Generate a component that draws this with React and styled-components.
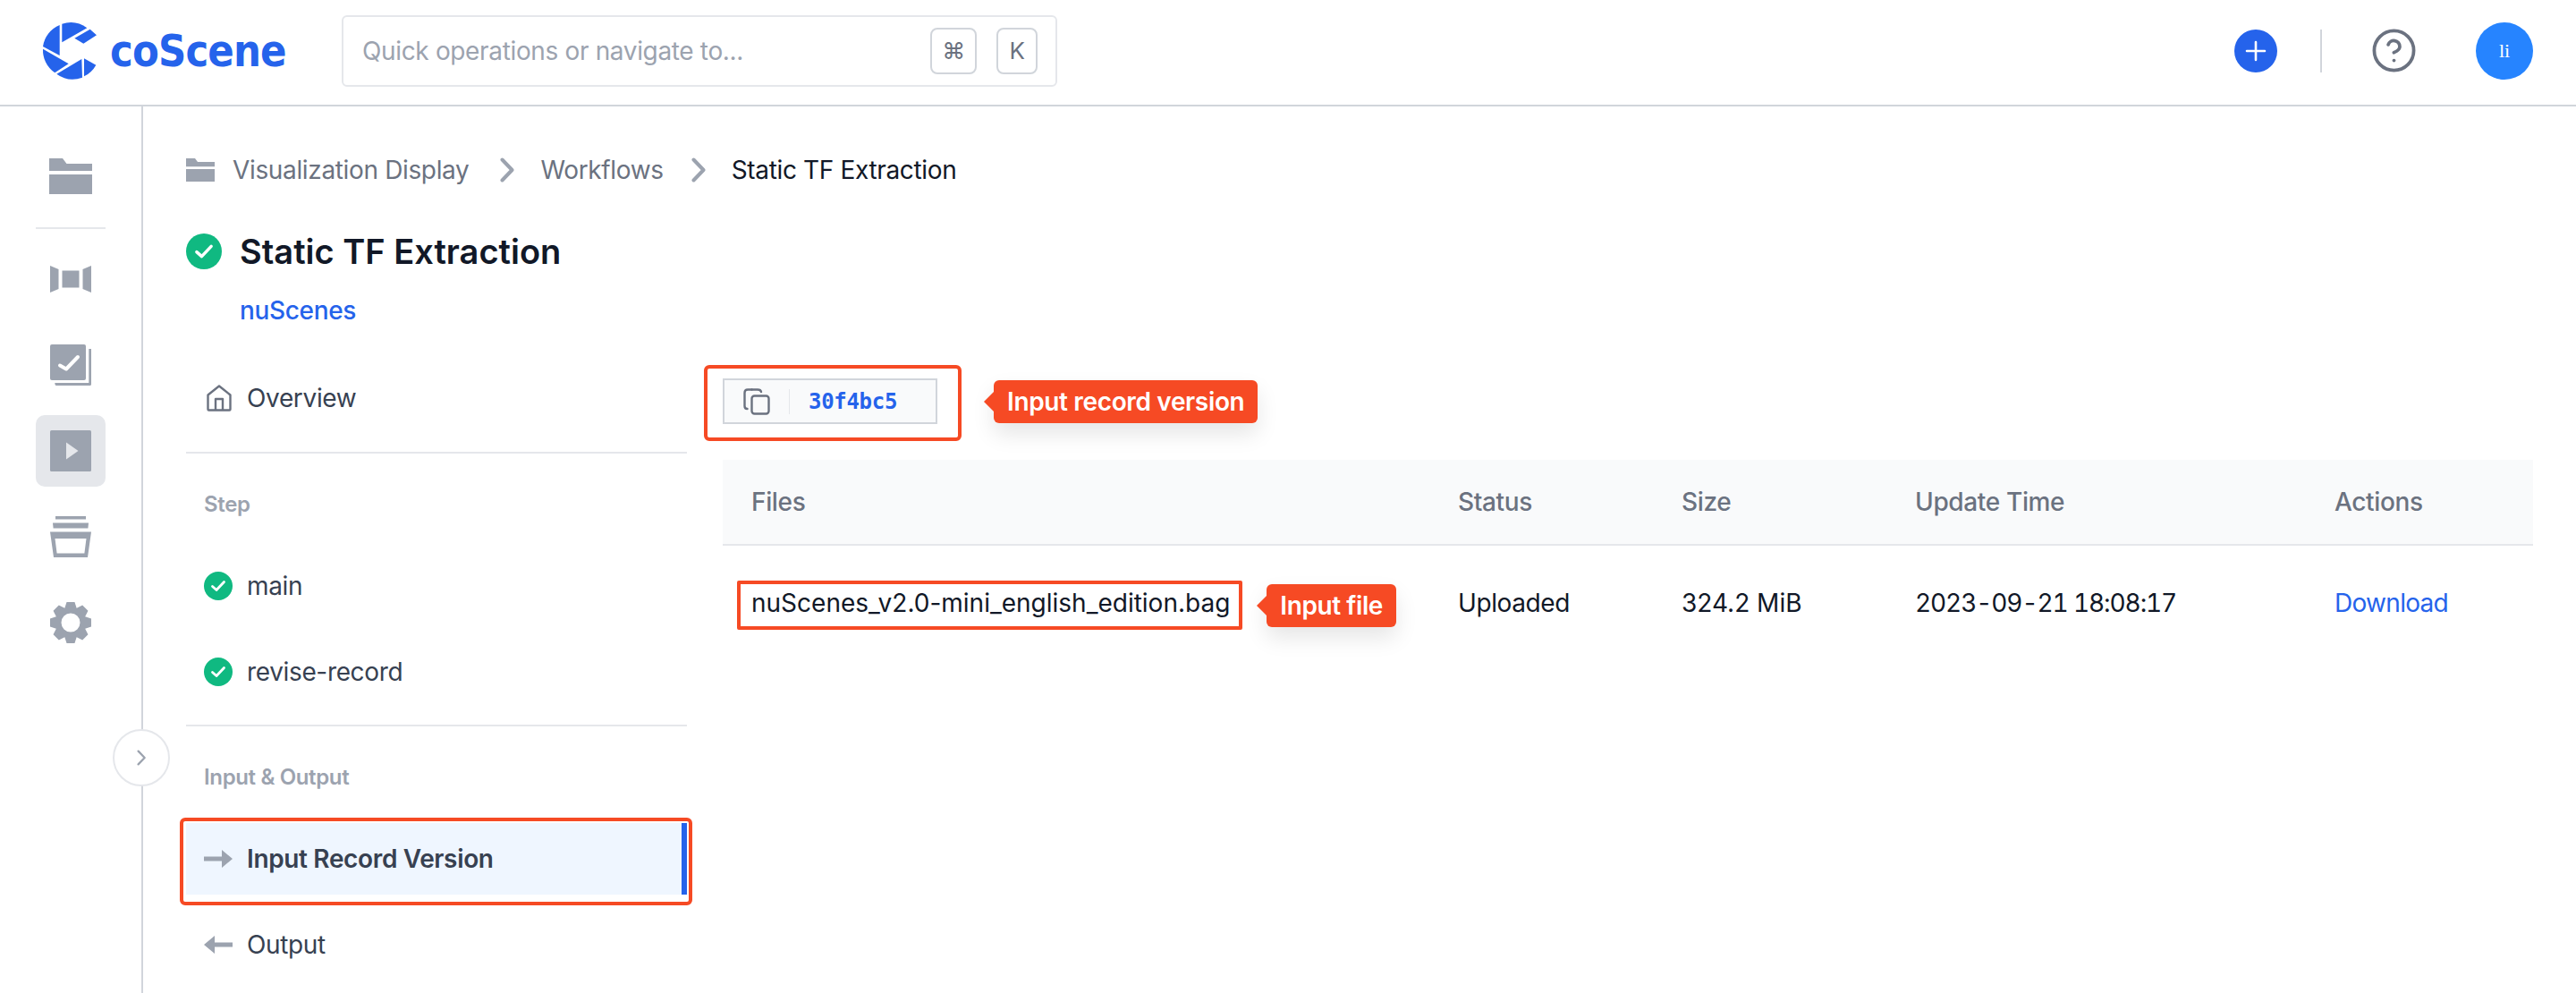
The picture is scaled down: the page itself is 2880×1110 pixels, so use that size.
import React from 'react';
import styled, { createGlobalStyle } from 'styled-components';
import { CircleHelp } from 'lucide-react';

const GlobalStyle = createGlobalStyle`
  html, body {
    margin: 0;
    padding: 0;
    background: #fff;
  }
  body {
    font-family: Inter, "Liberation Sans", sans-serif;
    letter-spacing: -0.35px;
    color: #111827;
  }
  * {
    box-sizing: border-box;
  }
`;

// 8 tooth gear, outer radius 23 in a 46 box
const gearPath = () => {
  const pts = [];
  for (let i = 0; i < 8; i++) {
    const a = (i * Math.PI) / 4 - Math.PI / 2;
    [[-0.39, 17.5], [-0.19, 23.5], [0.19, 23.5], [0.39, 17.5]].forEach(([da, r]) => {
      pts.push(`${(23 + r * Math.cos(a + da)).toFixed(2)} ${(23 + r * Math.sin(a + da)).toFixed(2)}`);
    });
  }
  return `M${pts.join('L')}Z M23 12.5a10.5 10.5 0 1 0 0 21a10.5 10.5 0 1 0 0-21Z`;
};

const Logo = () => (
  <LogoMark viewBox="0 0 210 210" width="70" height="70">
    <path d="M68 18L68 120L12 90A92 92 0 0 1 68 18Z" />
    <path d="M76 14A92 92 0 0 1 160 28L76 76Z" />
    <path d="M118 62L170 32L192 52L148 80Z" />
    <path d="M12 98L98 148L52 178A92 92 0 0 1 12 98Z" />
    <path d="M58 182L142 132L144 194A92 92 0 0 1 58 182Z" />
    <path d="M150 130L190 152A92 92 0 0 1 150 190Z" />
  </LogoMark>
);

const FolderIcon = ({ size = 48 }) => (
  <svg viewBox="0 0 48 40" width={size} height={(size * 40) / 48} fill="#9ca3af">
    <path d="M0 0H15L19.5 6H48V14H0Z" />
    <rect y="18" width="48" height="22" />
  </svg>
);

const SceneIcon = () => (
  <svg viewBox="0 0 46 30" width="46" height="30" fill="#9ca3af">
    <path d="M0 0L9.5 4V26L0 30Z" />
    <rect x="13.5" y="5.5" width="19" height="19" />
    <path d="M46 0L36.5 4V26L46 30Z" />
  </svg>
);

const TaskIcon = () => (
  <svg viewBox="0 0 46 46" width="46" height="46" fill="#9ca3af">
    <rect width="40" height="40" rx="2" />
    <path d="M43.3 5H46V44.5Q46 46 44.5 46H6.5Q5.3 46 5.3 43H43.3Z" />
    <path d="M11 23.5L18 27.5L31 14" fill="none" stroke="#fff" strokeWidth="4" strokeLinecap="round" strokeLinejoin="round" />
  </svg>
);

const PlayIcon = () => (
  <svg viewBox="0 0 46 46" width="46" height="46">
    <rect width="46" height="46" rx="1.5" fill="#9ca3af" />
    <path d="M18 13.5L31.5 23L18 32.5Z" fill="#e5e7eb" />
  </svg>
);

const BoxIcon = () => (
  <svg viewBox="0 0 46 46" width="46" height="46" fill="#9ca3af">
    <rect x="6" width="34" height="3.5" />
    <path d="M3 7.5H43L42.4 13.5H3.6Z" />
    <path fillRule="evenodd" d="M0 17.5H46L42 46H4ZM5.5 25L7.6 41.5H38.4L40.5 25Z" />
  </svg>
);

const GearIcon = () => (
  <svg viewBox="0 0 46 46" width="46" height="46" fill="#9ca3af">
    <path fillRule="evenodd" d={gearPath()} />
  </svg>
);

const CheckCircle = ({ size = 32 }) => (
  <svg viewBox="0 0 32 32" width={size} height={size}>
    <circle cx="16" cy="16" r="16" fill="#10b981" />
    <path d="M9.5 16.5L14 20.5L22.5 11.5" fill="none" stroke="#fff" strokeWidth="2.8" strokeLinecap="round" strokeLinejoin="round" />
  </svg>
);

const HomeIcon = () => (
  <svg viewBox="0 0 28 30" width="28" height="30" fill="none" stroke="#6b7280" strokeWidth="2.4" strokeLinejoin="round">
    <path d="M1.5 11.5L14 1.5L26.5 11.5V27.5Q26.5 28.5 25.5 28.5H2.5Q1.5 28.5 1.5 27.5Z" />
    <path d="M10 28.5V16H18V28.5" />
  </svg>
);

const ArrowRight = () => (
  <svg viewBox="0 0 32 20" width="32" height="20" fill="#9ca3af">
    <path d="M0 7.5H20V0L32 10L20 20V12.5H0Z" />
  </svg>
);

const ArrowLeft = () => (
  <svg viewBox="0 0 32 20" width="32" height="20" fill="#9ca3af">
    <path d="M32 7.5H12V0L0 10L12 20V12.5H32Z" />
  </svg>
);

const Chevron = ({ size = 28, stroke = 4, color = '#9ca3af' }) => (
  <svg viewBox="0 0 16 28" width={(size * 16) / 28} height={size} fill="none" stroke={color} strokeWidth={stroke} strokeLinecap="round" strokeLinejoin="round">
    <path d="M2.5 2.5L13.5 14L2.5 25.5" />
  </svg>
);

const CopyIcon = () => (
  <svg viewBox="0 0 30 30" width="30" height="30" fill="none" stroke="#6b7280" strokeWidth="2.4" strokeLinejoin="round">
    <rect x="9.5" y="8.5" width="19" height="20" rx="3" />
    <path d="M9.5 1.5H5Q1.5 1.5 1.5 5V20Q1.5 23 4.5 23" strokeLinecap="round" />
    <path d="M9.5 1.5H16Q19.5 1.5 20 4" strokeLinecap="round" />
  </svg>
);

function App() {
  return (
    <Page>
      <GlobalStyle />
      <Header>
        <LogoLink>
          <Logo />
          <LogoText>coScene</LogoText>
        </LogoLink>
        <SearchBox>
          <Placeholder>Quick operations or navigate to...</Placeholder>
          <KeyCap $wide>⌘</KeyCap>
          <KeyCap>K</KeyCap>
        </SearchBox>
        <HeaderRight>
          <AddButton>
            <svg viewBox="0 0 24 24" width="24" height="24" fill="none" stroke="#fff" strokeWidth="2.6" strokeLinecap="round">
              <path d="M12 2V22M2 12H22" />
            </svg>
          </AddButton>
          <HeaderDivider />
          <HelpButton>
            <CircleHelp size={53} strokeWidth={1.7} color="#6b7280" />
          </HelpButton>
          <Avatar>li</Avatar>
        </HeaderRight>
      </Header>

      <Body>
        <Rail>
          <RailItem><FolderIcon /></RailItem>
          <RailDivider />
          <RailItem><SceneIcon /></RailItem>
          <RailItem $gap><TaskIcon /></RailItem>
          <RailItem $gap $active><PlayIcon /></RailItem>
          <RailItem $gap><BoxIcon /></RailItem>
          <RailItem $gap><GearIcon /></RailItem>
          <CollapseButton><Chevron size={18} stroke={3.5} /></CollapseButton>
        </Rail>

        <Main>
          <Breadcrumb>
            <FolderIcon size={32} />
            <Crumb $first>Visualization Display</Crumb>
            <Chevron />
            <Crumb>Workflows</Crumb>
            <Chevron />
            <Crumb $current>Static TF Extraction</Crumb>
          </Breadcrumb>

          <TitleRow>
            <CheckCircle size={40} />
            <Title>Static TF Extraction</Title>
          </TitleRow>
          <ProjectLink>nuScenes</ProjectLink>

          <Columns>
            <Side>
              <SideItem>
                <IconSlot $home><HomeIcon /></IconSlot>
                Overview
              </SideItem>
              <SideDivider />
              <SectionLabel>Step</SectionLabel>
              <SideItem><IconSlot><CheckCircle /></IconSlot>main</SideItem>
              <SideItem $gap><IconSlot><CheckCircle /></IconSlot>revise-record</SideItem>
              <SideDivider $tight />
              <SectionLabel>Input &amp; Output</SectionLabel>
              <SideItem $active>
                <IconSlot><ArrowRight /></IconSlot>
                Input Record Version
                <ActiveOutline />
              </SideItem>
              <SideItem $gap><IconSlot><ArrowLeft /></IconSlot>Output</SideItem>
            </Side>

            <Content>
              <VersionRow>
                <VersionChip>
                  <CopyIcon />
                  <ChipDivider />
                  <VersionHash>30f4bc5</VersionHash>
                  <ChipOutline />
                </VersionChip>
                <Callout $left={63}>Input record version</Callout>
              </VersionRow>

              <Table>
                <HeadRow>
                  <HeadCell>Files</HeadCell>
                  <HeadCell>Status</HeadCell>
                  <HeadCell>Size</HeadCell>
                  <HeadCell>Update Time</HeadCell>
                  <HeadCell>Actions</HeadCell>
                </HeadRow>
                <DataRow>
                  <Cell>
                    <FileBox>nuScenes_v2.0-mini_english_edition.bag</FileBox>
                    <Callout $left={27} $down={5}>Input file</Callout>
                  </Cell>
                  <Cell>Uploaded</Cell>
                  <Cell $num>324.2 MiB</Cell>
                  <Cell $date>2023-09-21 18:08:17</Cell>
                  <Cell><DownloadLink>Download</DownloadLink></Cell>
                </DataRow>
              </Table>
            </Content>
          </Columns>
        </Main>
      </Body>
    </Page>
  );
}

const Page = styled.div`
  width: 2880px;
  height: 1110px;
  overflow: hidden;
  display: flex;
  flex-direction: column;
  background: #fff;
`;

const Header = styled.header`
  flex: none;
  height: 119px;
  display: flex;
  align-items: center;
  padding: 0 48px 4px 44px;
  border-bottom: 2px solid #d1d5db;
`;

const LogoLink = styled.div`
  display: flex;
  align-items: center;
  width: 338px;
`;

const LogoMark = styled.svg`
  fill: #2563eb;
  flex: none;
`;

const LogoText = styled.span`
  margin-left: 9px;
  font-family: "DejaVu Sans", sans-serif;
  font-weight: 700;
  font-size: 50px;
  letter-spacing: -1px;
  line-height: 64px;
  color: #2563eb;
  transform: scaleX(0.87);
  transform-origin: left center;
`;

const SearchBox = styled.div`
  width: 800px;
  height: 80px;
  display: flex;
  align-items: center;
  padding: 0 20px 0 21px;
  border: 2px solid #e5e7eb;
  border-radius: 6px;
`;

const Placeholder = styled.span`
  flex: 1;
  font-size: 28px;
  color: #9ca3af;
`;

const KeyCap = styled.span`
  width: ${(p) => (p.$wide ? '52px' : '46px')};
  height: 52px;
  margin-left: ${(p) => (p.$wide ? '0' : '22px')};
  display: flex;
  align-items: center;
  justify-content: center;
  border: 2px solid #d1d5db;
  border-radius: 8px;
  font-size: 26px;
  font-family: Inter, "DejaVu Sans", sans-serif;
  color: #6b7280;
`;

const HeaderRight = styled.div`
  margin-left: auto;
  display: flex;
  align-items: center;
`;

const AddButton = styled.div`
  width: 48px;
  height: 48px;
  border-radius: 50%;
  background: #2563eb;
  display: flex;
  align-items: center;
  justify-content: center;
`;

const HeaderDivider = styled.div`
  width: 2px;
  height: 48px;
  margin-left: 48px;
  background: #d1d5db;
`;

const HelpButton = styled.div`
  margin-left: 54px;
  width: 53px;
  height: 53px;
  display: flex;
`;

const Avatar = styled.div`
  margin-left: 65px;
  width: 64px;
  height: 64px;
  border-radius: 50%;
  background: #2684ff;
  color: #fff;
  font-family: "Liberation Serif", serif;
  font-size: 22px;
  letter-spacing: 0;
  display: flex;
  align-items: center;
  justify-content: center;
`;

const Body = styled.div`
  flex: 1;
  display: flex;
  min-height: 0;
`;

const Rail = styled.nav`
  position: relative;
  flex: none;
  width: 160px;
  padding: 38px 0 0 40px;
  border-right: 2px solid #d1d5db;
`;

const RailItem = styled.div`
  width: 78px;
  height: 80px;
  margin-top: ${(p) => (p.$gap ? '16px' : '0')};
  display: flex;
  align-items: center;
  justify-content: center;
  border-radius: 10px;
  background: ${(p) => (p.$active ? '#e5e7eb' : 'transparent')};
`;

const RailDivider = styled.div`
  width: 78px;
  height: 2px;
  margin: 17px 0 16px;
  background: #e5e7eb;
`;

const CollapseButton = styled.div`
  position: absolute;
  top: 696px;
  left: 126px;
  width: 64px;
  height: 64px;
  border-radius: 50%;
  border: 2px solid #e5e7eb;
  background: #fff;
  display: flex;
  align-items: center;
  justify-content: center;
`;

const Main = styled.main`
  flex: 1;
  min-width: 0;
  padding: 51px 48px 0;
`;

const Breadcrumb = styled.div`
  height: 40px;
  display: flex;
  align-items: center;
`;

const Crumb = styled.span`
  margin: ${(p) => (p.$current ? '0 0 0 29px' : p.$first ? '0 35px 0 20px' : '0 31px 0 29px')};
  font-size: 28px;
  color: ${(p) => (p.$current ? '#111827' : '#6b7280')};
`;

const TitleRow = styled.div`
  margin-top: 49px;
  height: 44px;
  display: flex;
  align-items: center;
`;

const Title = styled.h1`
  margin: 0 0 0 20px;
  font-size: 38px;
  font-weight: 600;
  letter-spacing: 0;
  color: #111827;
`;

const ProjectLink = styled.a`
  display: block;
  margin: 26px 0 0 60px;
  height: 36px;
  line-height: 36px;
  font-size: 28px;
  font-weight: 500;
  color: #2563eb;
`;

const Columns = styled.div`
  margin-top: 40px;
  display: flex;
  gap: 40px;
`;

const Side = styled.aside`
  flex: none;
  width: 560px;
`;

const SideItem = styled.div`
  position: relative;
  height: 80px;
  margin-top: ${(p) => (p.$gap ? '16px' : '0')};
  padding-left: 20px;
  display: flex;
  align-items: center;
  font-size: 28px;
  font-weight: ${(p) => (p.$active ? 600 : 400)};
  color: #374151;
  background: ${(p) => (p.$active ? '#eff6ff' : 'transparent')};
  border-right: ${(p) => (p.$active ? '6px solid #2563eb' : '0')};
`;

const IconSlot = styled.span`
  width: 32px;
  margin: ${(p) => (p.$home ? '0 15px 0 1px' : '0 16px 0 0')};
  display: flex;
  align-items: center;
  justify-content: center;
`;

const SideDivider = styled.div`
  height: 2px;
  margin-top: ${(p) => (p.$tight ? '19px' : '20px')};
  background: #e5e7eb;
`;

const SectionLabel = styled.div`
  margin: 21px 0 17px;
  height: 70px;
  padding-left: 20px;
  display: flex;
  align-items: center;
  font-size: 24px;
  font-weight: 600;
  color: #9ca3af;
`;

const ActiveOutline = styled.span`
  position: absolute;
  top: -6px;
  left: -7px;
  right: -12px;
  bottom: -12px;
  border: 4px solid #f64a24;
  border-radius: 6px;
`;

const Content = styled.section`
  flex: 1;
  min-width: 0;
  padding-top: 18px;
`;

const VersionRow = styled.div`
  height: 51px;
  display: flex;
  align-items: center;
`;

const VersionChip = styled.div`
  position: relative;
  width: 240px;
  height: 51px;
  display: flex;
  align-items: center;
  padding-left: 21px;
  background: #f9fafb;
  border: 2px solid #d1d5db;
`;

const ChipDivider = styled.span`
  width: 1px;
  height: 28px;
  margin: 0 21px;
  background: #e5e7eb;
`;

const VersionHash = styled.span`
  font-family: "DejaVu Sans Mono", monospace;
  font-size: 24px;
  font-weight: 700;
  letter-spacing: -0.3px;
  color: #2563eb;
`;

const ChipOutline = styled.span`
  position: absolute;
  top: -17px;
  left: -23px;
  right: -29px;
  bottom: -21px;
  border: 4px solid #f64a24;
  border-radius: 6px;
`;

const Callout = styled.span`
  position: relative;
  height: 48px;
  margin-left: ${(p) => p.$left}px;
  margin-top: ${(p) => p.$down || 0}px;
  padding: 0 15px;
  display: inline-flex;
  align-items: center;
  flex: none;
  background: #f64a24;
  color: #fff;
  font-size: 28px;
  font-weight: 600;
  border-radius: 6px;
  box-shadow: 0 12px 24px rgba(0, 0, 0, 0.1);

  &::before {
    content: '';
    position: absolute;
    top: 50%;
    left: -11px;
    margin-top: -12px;
    border-style: solid;
    border-width: 12px 12px 12px 0;
    border-color: transparent #f64a24 transparent transparent;
  }
`;

const Table = styled.div`
  margin-top: 40px;
`;

const columns = '790px 250px 261px 469px 254px';

const HeadRow = styled.div`
  display: grid;
  grid-template-columns: ${columns};
  height: 96px;
  align-items: center;
  background: #f9fafb;
  border-bottom: 2px solid #e5e7eb;
`;

const HeadCell = styled.div`
  padding-left: 32px;
  font-size: 28px;
  font-weight: 500;
  color: #6b7280;
`;

const DataRow = styled.div`
  display: grid;
  grid-template-columns: ${columns};
  height: 128px;
  align-items: center;
`;

const Cell = styled.div`
  padding-left: 32px;
  display: flex;
  align-items: center;
  font-size: 28px;
  letter-spacing: ${(p) => (p.$date ? '-1.1px' : p.$num ? '0' : '-0.4px')};
  font-variant-numeric: ${(p) => (p.$date ? 'tabular-nums' : 'normal')};
  color: #111827;
`;

const FileBox = styled.span`
  height: 55px;
  margin: 5px 0 0 -16px;
  padding: 0 10px 5px 12px;
  display: inline-flex;
  align-items: center;
  flex: none;
  border: 4px solid #f64a24;
  border-radius: 2px;
  letter-spacing: 0;
`;

const DownloadLink = styled.a`
  color: #2563eb;
  letter-spacing: -0.7px;
`;

export default App;
